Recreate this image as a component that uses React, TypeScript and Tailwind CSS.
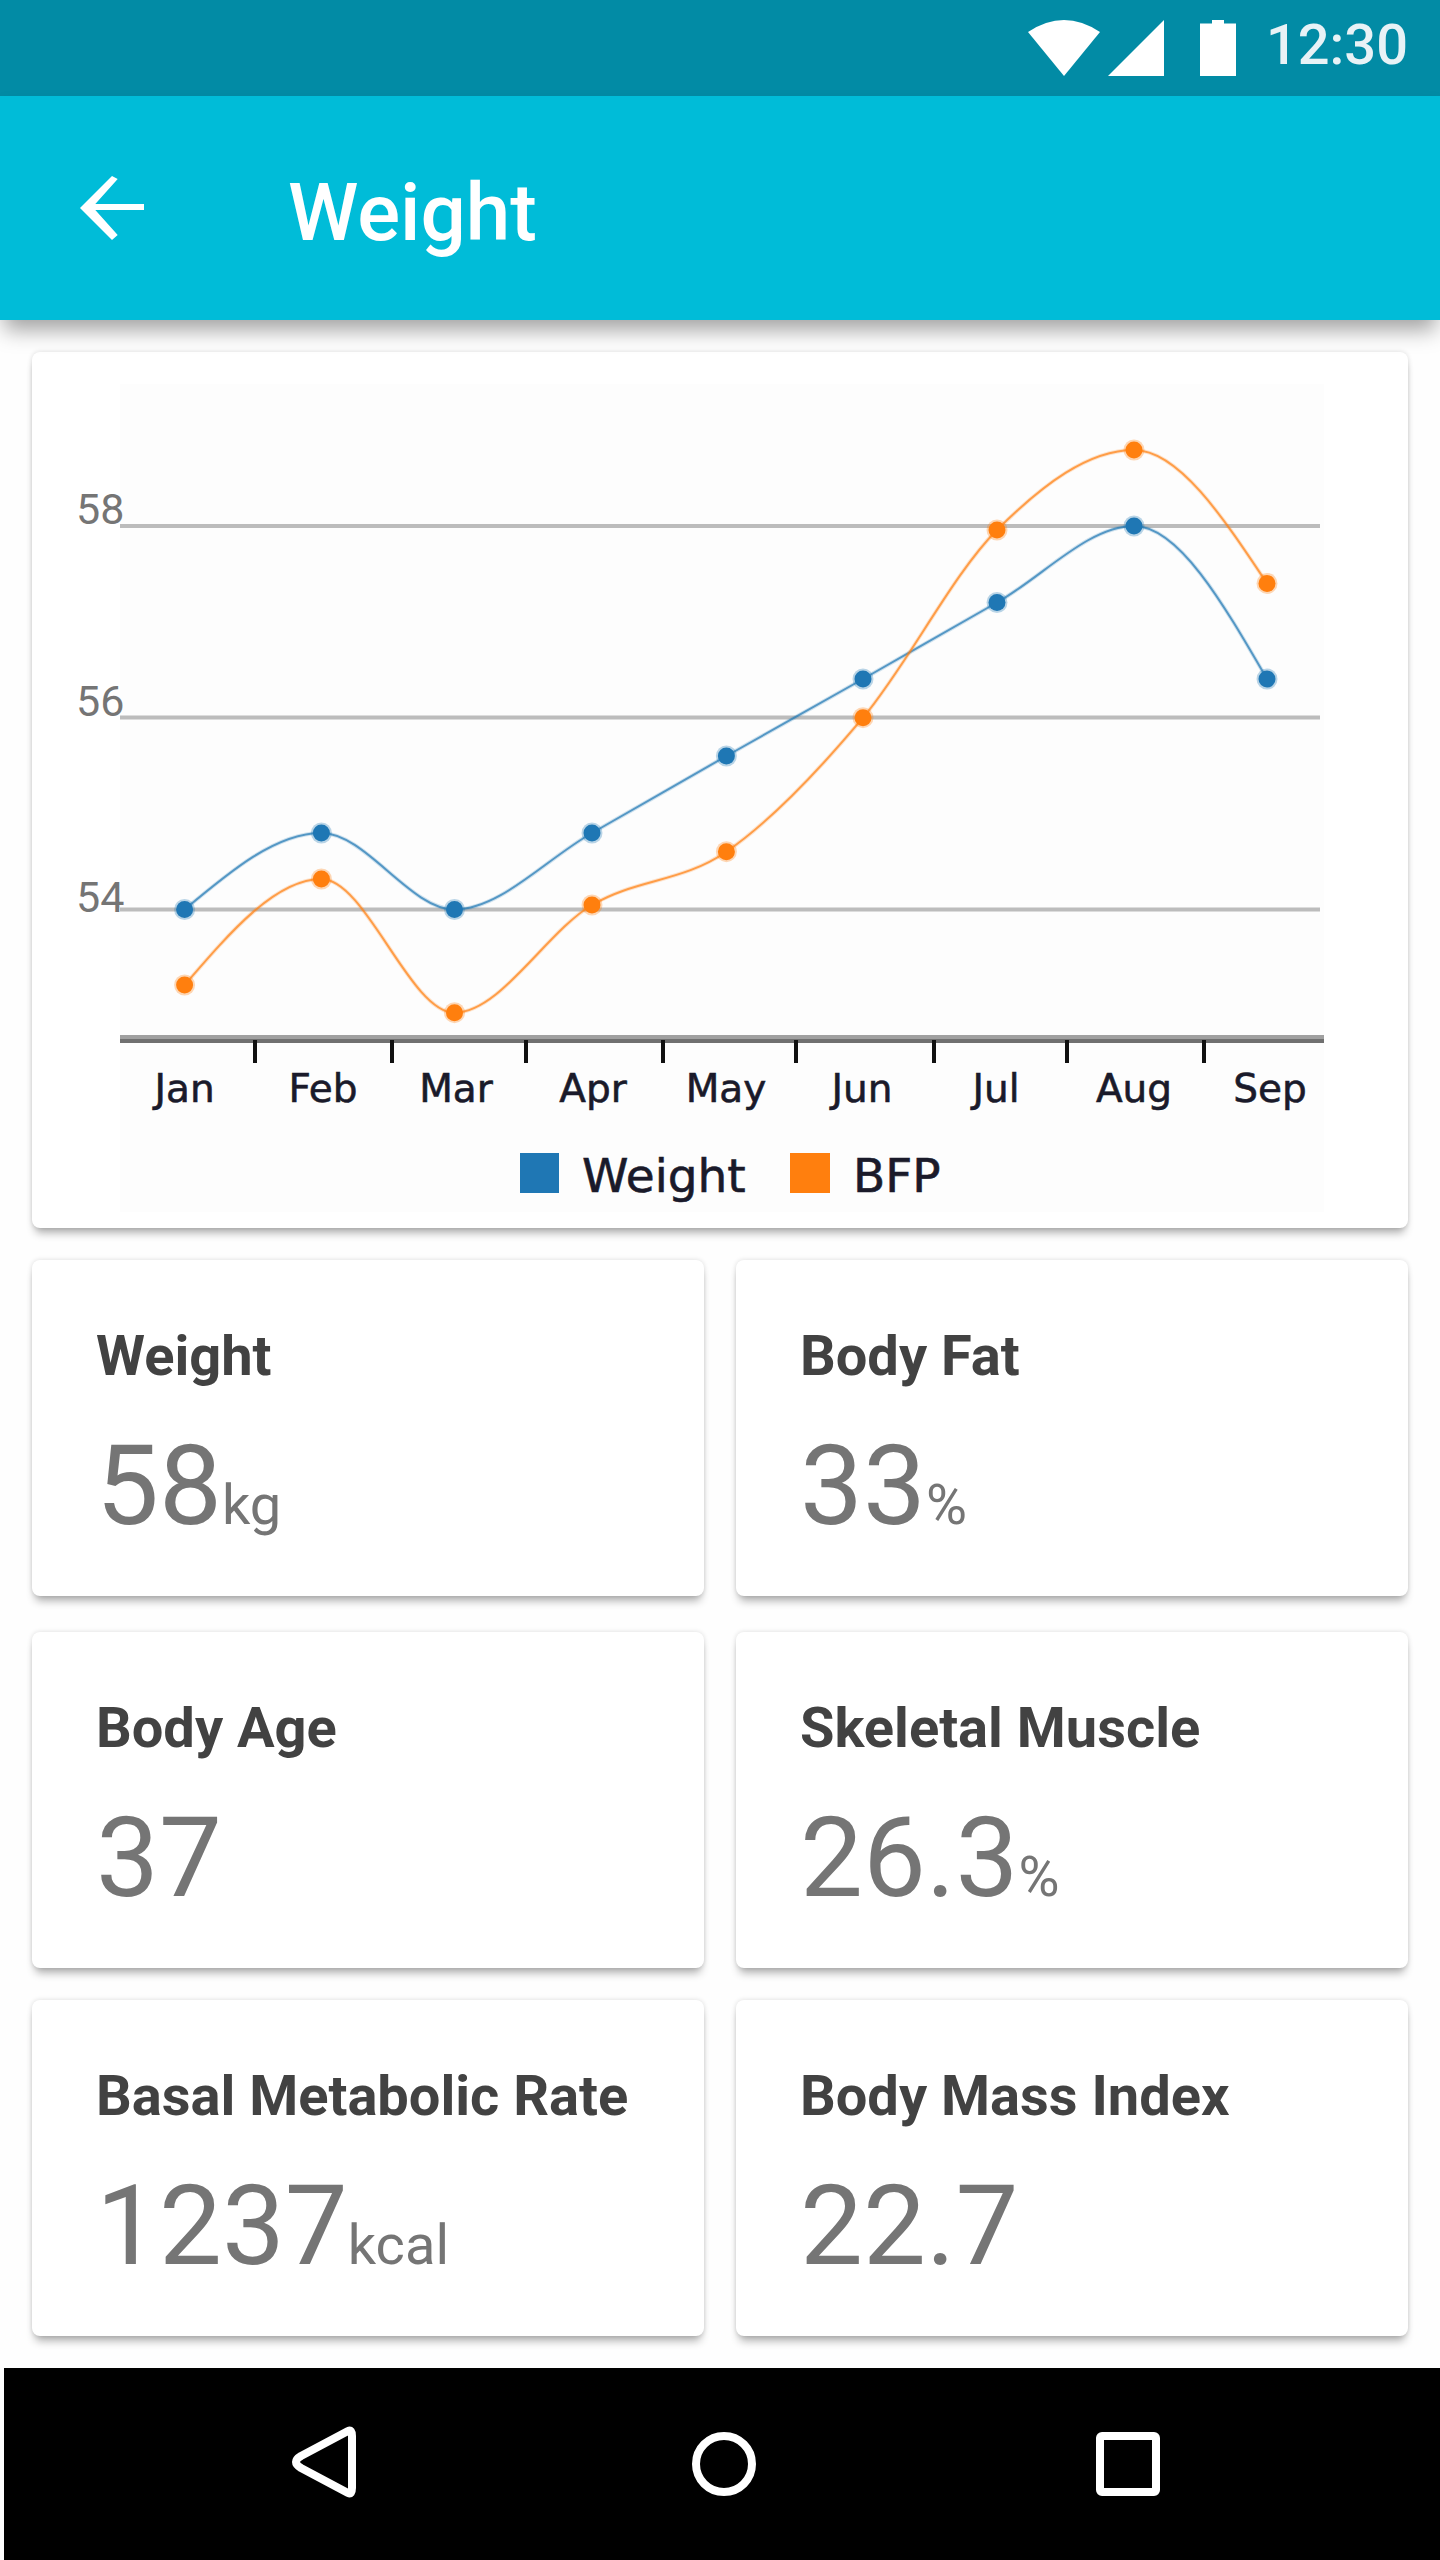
const W = [[184.6,909.5],[321.4,833],[454.5,909.5],[592,833],[726.4,756],[863,679],[997,602.5],[1134,526],[1267,679]];
const B = [[184.6,985],[321.4,879],[454.5,1012.7],[592,905],[726.4,851.7],[863,717.7],[997,530],[1134,450],[1267,583.4]];

function monotone(p: number[][]) {
  const n = p.length;
  const d: number[] = [];
  const m: number[] = [];
  for (let i = 0; i < n - 1; i++) d.push((p[i + 1][1] - p[i][1]) / (p[i + 1][0] - p[i][0]));
  for (let i = 1; i < n - 1; i++) {
    if (d[i - 1] * d[i] <= 0) m[i] = 0;
    else {
      const h0 = p[i][0] - p[i - 1][0];
      const h1 = p[i + 1][0] - p[i][0];
      const t = (d[i - 1] * h1 + d[i] * h0) / (h0 + h1);
      m[i] = Math.sign(d[i]) * Math.min(Math.abs(d[i - 1]), Math.abs(d[i]), 0.5 * Math.abs(t)) * 2;
    }
  }
  m[0] = (3 * d[0] - m[1]) / 2;
  m[n - 1] = (3 * d[n - 2] - m[n - 2]) / 2;
  let s = `M${p[0][0]} ${p[0][1]}`;
  for (let i = 0; i < n - 1; i++) {
    const h = (p[i + 1][0] - p[i][0]) / 3;
    s += `C${p[i][0] + h} ${p[i][1] + m[i] * h} ${p[i + 1][0] - h} ${p[i + 1][1] - m[i + 1] * h} ${p[i + 1][0]} ${p[i + 1][1]}`;
  }
  return s;
}

const months = [["Jan",184.6],["Feb",323],["Mar",456],["Apr",593],["May",726],["Jun",862],["Jul",996],["Aug",1134],["Sep",1270]] as const;
const ticks = [255,392,526,663,796,934,1067,1204];

function Series({ pts, color }: { pts: number[][]; color: string }) {
  return (
    <g>
      <path d={monotone(pts)} fill="none" stroke={color} strokeWidth={4} opacity={0.2} />
      <path d={monotone(pts)} fill="none" stroke={color} strokeWidth={2} opacity={0.7} />
      {pts.map((p, i) => (
        <g key={i}>
          <circle cx={p[0]} cy={p[1]} r={10.5} fill={color} opacity={0.3} />
          <circle cx={p[0]} cy={p[1]} r={8.5} fill={color} />
        </g>
      ))}
    </g>
  );
}

function Chart() {
  return (
    <svg className="block w-full h-full" viewBox="32 352 1376 876">
      <rect x={120} y={384} width={1204} height={828} fill="#fdfdfd" />
      {[526, 717.5, 909.5].map((y) => (
        <rect key={y} x={120} y={y - 2} width={1200} height={4} fill="#bcbcbc" />
      ))}
      {[["58",524],["56",716],["54",912]].map(([t, y]) => (
        <text key={t as string} x={76} y={y as number} fontSize={43} fill="#757575" fontFamily="Roboto, sans-serif">{t}</text>
      ))}
      <Series pts={W} color="#1f77b4" />
      <Series pts={B} color="#ff7f0e" />
      <rect x={120} y={1035} width={1204} height={4} fill="#a0a0a0" />
      <rect x={120} y={1039} width={1204} height={4} fill="#707070" />
      {ticks.map((x) => (
        <rect key={x} x={x - 2} y={1040} width={4} height={23} fill="#111111" />
      ))}
      {months.map(([m, x]) => (
        <text key={m} x={x} y={1101.5} textAnchor="middle" fontSize={39} fill="#1a1a2a" stroke="#1a1a2a" strokeWidth={0.6} fontFamily="'DejaVu Sans', sans-serif">{m}</text>
      ))}
      <rect x={520} y={1153} width={39} height={40} fill="#1f77b4" />
      <text x={582} y={1192} fontSize={47} fill="#1a1a2a" stroke="#1a1a2a" strokeWidth={0.6} fontFamily="'DejaVu Sans', sans-serif">Weight</text>
      <rect x={790} y={1153} width={40} height={40} fill="#ff7f0e" />
      <text x={853} y={1192} fontSize={47} fill="#1a1a2a" stroke="#1a1a2a" strokeWidth={0.6} fontFamily="'DejaVu Sans', sans-serif">BFP</text>
    </svg>
  );
}

function Stat({ title, value, unit }: { title: string; value: string; unit?: string }) {
  return (
    <div className="h-[336px] bg-white rounded-lg pl-16 pt-16 shadow-[0_8px_8px_-3px_rgba(0,0,0,0.3),0_0_5px_rgba(0,0,0,0.14)]">
      <div className="text-[56px] leading-[64px] font-bold text-[#424242]">{title}</div>
      <div className="mt-[42px] text-[112px] leading-[112px] text-[#757575] whitespace-nowrap">
        {value}
        {unit && <span className="text-[56px] font-normal">{unit}</span>}
      </div>
    </div>
  );
}

export default function App() {
  return (
    <div className="w-[1440px] h-[2560px] flex flex-col bg-[#fefefe] overflow-hidden font-['Roboto',sans-serif]">
      <div className="h-24 shrink-0 bg-[#028ba5] flex items-start justify-end relative">
        <svg className="absolute left-0 top-0" width="1240" height="96" viewBox="0 0 1240 96">
          <path d="M1028 32Q1064 8 1100 32L1064 76Z" fill="#fff" />
          <path d="M1108 76L1164 20V76Z" fill="#fff" />
          <path d="M1212 20H1224V23.5H1236V76H1200V23.5H1212Z" fill="#fff" />
        </svg>
        <span className="mr-[32px] mt-[12px] text-[56px] leading-[66px] font-medium text-[#e8f2f6]">12:30</span>
      </div>
      <div className="h-[224px] shrink-0 bg-[#00bcd8] flex items-center relative z-10 shadow-[0_14px_20px_-4px_rgba(0,0,0,0.36)]">
        <svg className="ml-20 shrink-0" width="64" height="64" viewBox="0 0 64 64">
          <path d="M64 28H15.3L37.7 3 32 0 0 32l32 32 5.7-5-22.4-25H64z" fill="#fff" />
        </svg>
        <div className="ml-[144px] mt-[10px] text-[80px] leading-[96px] font-medium text-white">Weight</div>
      </div>
      <div className="flex-1 px-8 pt-8 flex flex-col">
        <div className="h-[876px] bg-white rounded-lg shrink-0 shadow-[0_8px_8px_-3px_rgba(0,0,0,0.3),0_0_5px_rgba(0,0,0,0.14)]">
          <Chart />
        </div>
        <div className="mt-8 grid grid-cols-2 gap-x-8 gap-y-9">
          <Stat title="Weight" value="58" unit="kg" />
          <Stat title="Body Fat" value="33" unit="%" />
          <Stat title="Body Age" value="37" />
          <Stat title="Skeletal Muscle" value="26.3" unit="%" />
        </div>
        <div className="mt-8 grid grid-cols-2 gap-x-8">
          <Stat title="Basal Metabolic Rate" value="1237" unit="kcal" />
          <Stat title="Body Mass Index" value="22.7" />
        </div>
      </div>
      <div className="h-48 shrink-0 ml-1 bg-black relative">
        <svg className="absolute left-[-4px] top-0" width="1440" height="192" viewBox="0 2368 1440 192">
          <path d="M348 2431Q352 2429 352 2436V2488Q352 2495 348 2493L301 2468Q291 2462 301 2456Z" fill="none" stroke="#fff" strokeWidth={8} strokeLinejoin="round" />
          <circle cx={724} cy={2464} r={28} fill="none" stroke="#fff" strokeWidth={8} />
          <rect x={1100} y={2436} width={56} height={56} rx={2} fill="none" stroke="#fff" strokeWidth={8} />
        </svg>
      </div>
    </div>
  );
}
